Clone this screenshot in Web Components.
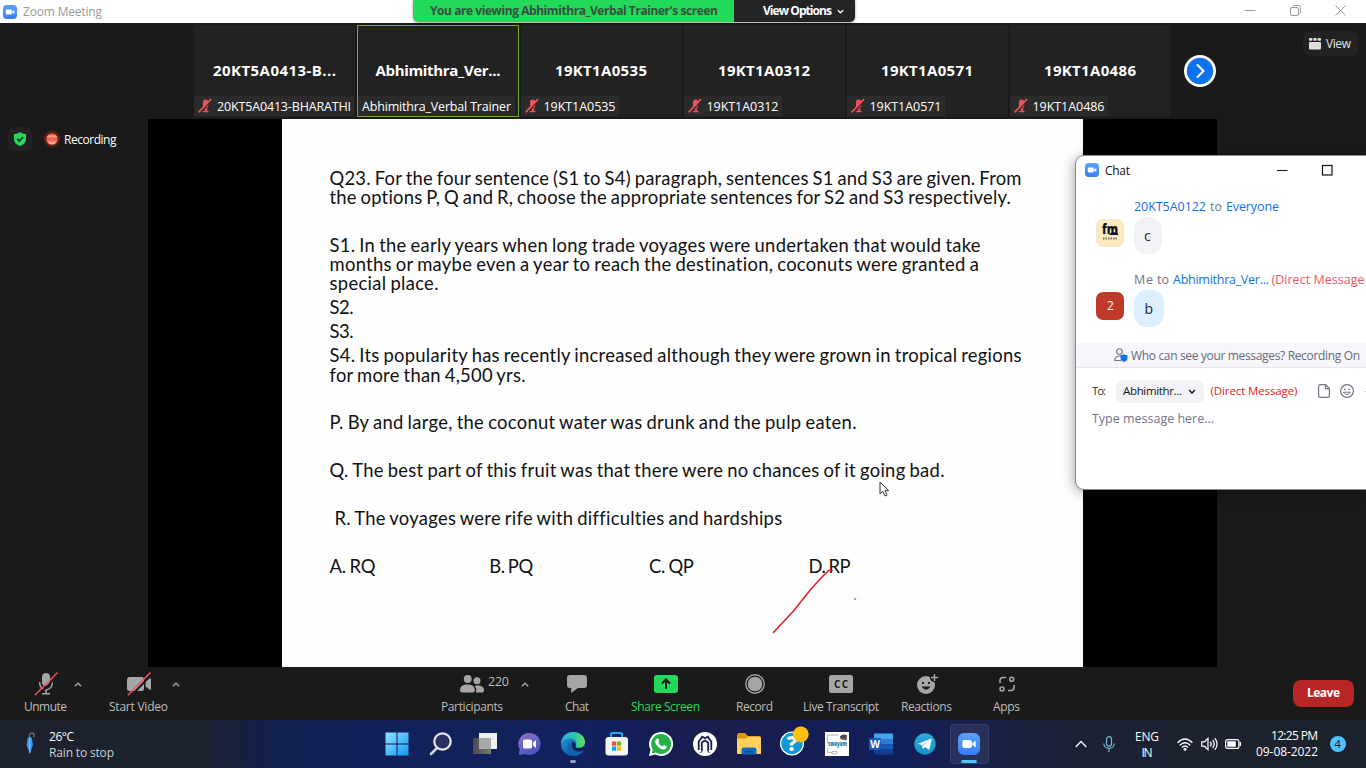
<!DOCTYPE html>
<html lang="en">
<head>
<meta charset="utf-8">
<title>Zoom Meeting</title>
<style>
html,body{margin:0;padding:0;overflow:hidden}
body{width:1366px;height:768px;font-family:"Open Sans","Noto Sans",sans-serif;font-size:12px;background:#1a1a1a}
</style>
</head>
<body>
<meeting-desktop></meeting-desktop>
<script>
const ICONS = {
zoom:[14,14,`<defs><linearGradient id="z" x2="0" y2="1"><stop stop-color="#5aa2fb"/><stop offset="1" stop-color="#3b7df5"/></linearGradient></defs><rect width="14" height="14" rx="3.8" fill="url(#z)"/><rect x="2.8" y="4.5" width="6" height="5" rx="1.1" fill="#fff"/><path d="M9.2 6.4 11.3 4.9v4.2L9.2 7.7z" fill="#fff"/>`],
micOff:[14,14,`<g fill="#f0525a"><rect x="5" y=".6" width="5.2" height="8.2" rx="2.6"/><path d="M5.300 9.500h4.400l-.6 1.500v1.100h1.500v1.200H4.600v-1.200h2.200v-1.600z"/></g><path d="M14 .4 1.900 14" stroke="#292929" stroke-width="1.500"/><path d="M13 .2.6 13.400" stroke="#f0525a" stroke-width="1.700"/>`],
shield:[12,14,`<path d="M6 0C8 1.6 10 2 12 2v5c0 3.5-2.7 5.9-6 7C2.700 12.900 0 10.500 0 7V2C2 2 4 1.600 6 0z" fill="#23d959"/><path d="M3.200 6.900 5.400 9l3.800-4" fill="none" stroke="#1f2a22" stroke-width="1.700"/>`],
rec:[20,20,`<defs><radialGradient id="g"><stop offset=".55" stop-color="#c4320b" stop-opacity=".75"/><stop offset="1" stop-color="#5a2010" stop-opacity="0"/></radialGradient><linearGradient id="h" x2="0" y2="1"><stop stop-color="#e5402e"/><stop offset=".25" stop-color="#ff9d92"/><stop offset=".5" stop-color="#f2503f"/><stop offset="1" stop-color="#ffc4b4"/></linearGradient></defs><circle cx="10" cy="10" r="9.500" fill="url(#g)"/><circle cx="10" cy="10" r="5.500" fill="url(#h)"/>`],
grid:[12,12,`<g fill="#dedede"><rect width="3.400" height="2.800" rx=".8"/><rect x="4.300" width="3.400" height="2.800" rx=".8"/><rect x="8.600" width="3.400" height="2.800" rx=".8"/><rect y="4" width="12" height="7.500" rx=".8"/></g>`],
next:[32,32,`<circle cx="16" cy="16" r="16" fill="#fff"/><circle cx="16" cy="16" r="13.200" fill="#0e72ed"/><path d="M13.500 10l6 6-6 6" fill="none" stroke="#fff" stroke-width="2" stroke-linecap="round"/>`],
min:[11,11,`<path d="M0 5.500h10.500" stroke="currentColor"/>`],
restore:[11,11,`<path d="M2.500 1.500Q2.700.5 3.800.5H8.500q2 0 2 2V7q0 1.200-1 1.500" fill="none" stroke="currentColor"/><rect x=".5" y="2.500" width="8" height="8" rx="1.500" fill="none" stroke="currentColor"/>`],
close:[11,11,`<path d="M.5.500l10 10M10.500.500l-10 10" stroke="currentColor"/>`],
square:[11,11,`<rect x=".5" y=".5" width="9.500" height="9.500" fill="none" stroke="currentColor" stroke-width="1.200"/>`],
down:[8,5,`<path d="M1 1l3 3 3-3" fill="none" stroke="currentColor" stroke-width="1.500"/>`],
up:[8,5,`<path d="M.8 4.300 4 1.200l3.200 3.100" fill="none" stroke="currentColor" stroke-width="1.400"/>`],
mic:[24,24,`<g fill="#a6a6a6"><rect x="8" y="1" width="8" height="13" rx="4"/><path d="M5 10v1.500a7 7 0 0 0 6.200 6.900V21H8v1.500h8V21h-3.200v-2.600a7 7 0 0 0 6.200-6.900V10h-1.500v1.500a5.500 5.500 0 0 1-11 0V10z"/></g><path d="M25 2 3 25" stroke="#1a1a1a" stroke-width="2"/><path d="M23.500.5.800 23.200" stroke="#f3545c" stroke-width="1.500"/>`],
cam:[26,24,`<rect x="1" y="5" width="17" height="14" rx="2.500" fill="#a6a6a6"/><path d="M19.500 9.500 23.500 6.500q1.500-.8 1.500.6v9.800q0 1.400-1.500.6l-4-3z" fill="#a6a6a6"/><path d="M26 2 4 25" stroke="#1a1a1a" stroke-width="2"/><path d="M24.500.5 1.800 23.200" stroke="#f3545c" stroke-width="1.500"/>`],
people:[24,18,`<g fill="#a6a6a6"><circle cx="7.700" cy="4" r="3.900"/><path d="M0 15c0-4.200 3.500-5.600 7.500-5.600s7.300 1.400 7.300 5.600q0 2.500-2.500 2.500H2.500Q0 17.500 0 15z"/><circle cx="17" cy="5.800" r="3.500"/><path d="M14.600 11c5-1.300 9.400.4 9.400 4.200 0 1.600-.8 2.300-2 2.300h-6.200c1.200-2.700.4-5.300-1.200-6.500z"/></g>`],
chat:[20,18,`<path d="M3 0h14q3 0 3 3v7q0 3-3 3H11l-6.800 5V13H3q-3 0-3-3V3q0-3 3-3z" fill="#a6a6a6"/>`],
share:[24,18,`<rect width="24" height="18" rx="3" fill="#23d959"/><path d="M12 14V5M8 8.500 12 4.500l4 4" fill="none" stroke="#1a1a1a" stroke-width="2"/>`],
record:[20,20,`<circle cx="10" cy="10" r="9.200" fill="none" stroke="#a6a6a6" stroke-width="1.400"/><circle cx="10" cy="10" r="7.300" fill="#a6a6a6"/>`],
cc:[24,18,`<rect width="24" height="18" rx="2.500" fill="#a6a6a6"/><text x="12" y="12.800" text-anchor="middle" textLength="14" font-size="10" font-weight="700" fill="#1a1a1a">CC</text>`],
react:[20,20,`<circle cx="9" cy="11" r="9" fill="#a6a6a6"/><circle cx="17.500" cy="3.600" r="4.600" fill="#1a1a1a"/><path d="M17.500 0v7M14 3.500h7" stroke="#a6a6a6" stroke-width="1.400"/><circle cx="6" cy="9" r="1.100"/><circle cx="12" cy="9" r="1.100"/><path d="M4.500 12.500Q9 19 13.500 12.500z" fill="#1a1a1a"/>`],
apps:[16,16,`<g fill="none" stroke="#a6a6a6" stroke-width="1.600"><path d="M7 1.500H4q-3 0-3 3V7M9 14.500h3q3 0 3-3V9"/><circle cx="12.700" cy="3.200" r="2"/><circle cx="3" cy="13" r="2"/></g>`],
userShield:[14,14,`<g fill="none" stroke="#747487" stroke-width="1.100"><circle cx="5.500" cy="3.500" r="2.800"/><path d="M7 12.500H.8C.8 9.500 2.500 8 6 8h1.500"/></g><path d="M10 6.200q1.500 1 3.500 1v3q0 2.600-3.500 3.800-3.500-1.200-3.500-3.800v-3q2 0 3.500-1z" fill="#0e72ed"/>`],
file:[12,14,`<path d="M2.500.600H7.500L11.400 4.500v7q0 1.900-1.900 1.900h-7Q.600 13.400.600 11.500v-9Q.600.600 2.500.600zM7.500.800v3.900h3.700" fill="none" stroke="#747487" stroke-width="1.200"/>`],
smile:[14,14,`<circle cx="7" cy="7" r="6.400" fill="none" stroke="#747487" stroke-width="1.200"/><circle cx="4.800" cy="5.300" r=".9" fill="#747487"/><circle cx="9.200" cy="5.300" r=".9" fill="#747487"/><path d="M3.500 8.200q3.500 4.800 7 0z" fill="none" stroke="#747487"/>`],
fm:[28,28,`<rect x=".5" y=".5" width="27" height="27" rx="6" fill="#fce9bd" stroke="#efe7d2"/><text x="6" y="14.500" textLength="16" lengthAdjust="spacingAndGlyphs" font-size="14" font-weight="800" fill="#111">fm</text><path d="M13 16q3-4 5-2.500 3-1.500 4.500 2.500z" fill="#10173d"/><path d="M7 19.500h14" stroke="#777" stroke-width="2.200" stroke-dasharray="1.500 1"/>`],
umbrella:[12,24,`<path d="M4.500 5.500V3.500Q4.500 1 7 1q2 0 2 2v2" fill="none" stroke="#77706d" stroke-width="1.400"/><path d="M2.800 6q2-2 4 0L8 13 6 18l-1.200 4.500L3.500 18 1.500 13z" fill="#3599ee"/><path d="M4.800 6v15" stroke="#82c7ff"/>`],
win:[24,24,`<defs><linearGradient id="w" x2="1" y2="1"><stop stop-color="#8de4ff"/><stop offset="1" stop-color="#1496f0"/></linearGradient></defs><path d="M.5.500h11v11H.5zM12.500.500h11v11h-11zM.5 12.500h11v11H.5zM12.500 12.500h11v11h-11z" fill="url(#w)"/>`],
search:[24,24,`<path d="M8.500 15.500 2 22" stroke="#cfd2d7" stroke-width="2.600" stroke-linecap="round"/><circle cx="13.500" cy="9.500" r="8.200" fill="#2a3263" stroke="#e6e8ee" stroke-width="2.200"/>`],
tasks:[24,24,`<defs><linearGradient id="t" x2="1"><stop stop-color="#4a4a4a"/><stop offset="1" stop-color="#777"/></linearGradient></defs><rect x="6" y="1" width="18" height="16" fill="#f1f1f1"/><rect y="6" width="18" height="16" fill="url(#t)"/><path d="M6 6h12v11H6z" fill="#a9a9ab"/>`],
teams:[24,24,`<defs><linearGradient id="m" x2=".6" y2="1"><stop stop-color="#a567b5"/><stop offset=".5" stop-color="#6767c4"/><stop offset="1" stop-color="#5051bd"/></linearGradient></defs><path d="M12.500 1A11 11 0 1 1 8 22l-5 1q-2 0-1.200-1.800l1-3.700A11 11 0 0 1 12.500 1z" fill="url(#m)"/><rect x="6" y="7.500" width="9" height="9" rx="1.500" fill="#fff"/><path d="M16 10.500l3-2.500v8l-3-2.500z" fill="#fff"/>`],
edge:[24,24,`<defs><linearGradient id="e" x2="1"><stop stop-color="#2fa9dd"/><stop offset=".6" stop-color="#2dc5b0"/><stop offset="1" stop-color="#67df51"/></linearGradient><linearGradient id="f" x2="1" y2="1"><stop stop-color="#2498e2"/><stop offset="1" stop-color="#0b4690"/></linearGradient></defs><circle cx="12" cy="12" r="12" fill="url(#f)"/><path d="M0 12C0 5 5.500 0 12 0c7 0 12 5 12 9.800 0 4-3 6.200-6.500 6.200-2.500 0-3.500-1.200-2.800-2.500C16 11 14.500 6.500 9.500 6.500 4.500 6.500 1 9 0 12z" fill="url(#e)"/><path d="M8 11c-4 6 0 12 5 12.800 4 .2 8-2 10-5-5 3-11 1-11.500-4.800z" fill="#1461ad"/><path d="M11 9.700q4 .5 3.700 3.800-1 2 2 2.500 3.500.5 6.300-1.500 1.500.5 0 3.500-6 3-9.700.300Q10 15.500 11 9.700z" fill="#12205a"/>`],
store:[24,24,`<path d="M6 5V2.500Q6 1 7.500 1h8Q17 1 17 2.500V5" fill="none" stroke="#23a7e9" stroke-width="2"/><rect x=".5" y="5" width="22.500" height="18.500" rx="3" fill="#f5f5f6"/><path d="M7 9.500h4.200v4.200H7z" fill="#f05022"/><path d="M12 9.500h4.200v4.200H12z" fill="#80b903"/><path d="M7 14.500h4.200v4.200H7z" fill="#04a1ea"/><path d="M12 14.500h4.200v4.200H12z" fill="#fbb700"/>`],
whatsapp:[24,24,`<path d="M12 0a12 12 0 1 1-5.500 22.600L0 24l1.500-6.200A12 12 0 0 1 12 0z" fill="#fff"/><path d="M12 2a10 10 0 1 1-5 18.600L2.800 21.500l1-4A10 10 0 0 1 12 2z" fill="#25b144"/><path d="M8 6.500q1.300-.4 1.700.8l.7 1.800-1.100 1.500q1.500 2.700 4.200 3.900l1.300-1.500 2.800 1.300q.5 3-2.900 3.300C10.500 17.500 6 12.500 6.200 9.300q.3-2 1.800-2.800z" fill="#fff"/>`],
hex:[24,24,`<circle cx="12" cy="12" r="12" fill="#fff"/><g fill="none" stroke="#19204c" stroke-width="1.800"><path d="M5.700 18V9.500L9.300 4.700 12 6.200l2.700-1.500 3.600 4.800V18"/><path d="M8.800 18.500V10.500L12 8.500l3.200 2v8"/></g><path d="M7.500 21 9.700 18M16.500 21l-2.200-3" stroke="#19204c"/>`],
folder:[24,24,`<path d="M0 3q0-2 2-2h6l3 3h11q2 0 2 2v14H0z" fill="#d9970e"/><path d="M0 6.500h9l2-1.800h11q2 0 2 2V22H0z" fill="#ffd15b"/><path d="M4.500 22.500V18q0-2.500 2.500-2.500h10q2.500 0 2.500 2.500v4.500z" fill="#0d6dbb"/><path d="M8 19.800h8" stroke="#15427c" stroke-width="1.500"/>`],
help:[32,30,`<circle cx="14" cy="17.500" r="12" fill="#fff"/><circle cx="14" cy="17.500" r="10.700" fill="#1097d5"/><text x="14" y="25" text-anchor="middle" font-size="21" font-weight="800" fill="#fff">?</text><circle cx="22.800" cy="8.300" r="7.900" fill="#ffc30f"/>`],
swayam:[24,24,`<rect width="24" height="24" fill="#fff"/><path d="M2.500 11V3h11" fill="none" stroke="#999" stroke-width=".8"/><path d="M15 4l3-1.500 4 .5-.5 5.500-6-1.500z" fill="#4c4648"/><path d="M18 6.500l3 .5" stroke="#c9504c"/><text x="3" y="13.500" textLength="19" lengthAdjust="spacingAndGlyphs" font-size="6.500" font-weight="800" fill="#187cac">swayam</text><path d="M2.500 16v4.500H7M7 19.500h5v2.300H7z" fill="none" stroke="#aaa" stroke-width=".8"/>`],
word:[24,24,`<path d="M5 1.500h19v7H5z" fill="#41a5ee"/><path d="M5 7h19v5.500H5z" fill="#2b7cd3"/><path d="M5 12.500h19V17H5z" fill="#185abd"/><path d="M5 17h19v5.500H5z" fill="#103f91"/><rect y="6" width="12" height="12" rx="1" fill="#185abd"/><text x="6" y="15.800" text-anchor="middle" font-size="10" font-weight="700" fill="#fff">W</text>`],
telegram:[24,24,`<defs><linearGradient id="k" x2="0" y2="1"><stop stop-color="#2aabdf"/><stop offset="1" stop-color="#1c8fc9"/></linearGradient></defs><circle cx="12" cy="12" r="10.700" fill="url(#k)"/><path d="M5 11.800 17.800 6.700q1-.2.8 1L16.500 17q-.3 1-1.200.5l-3.200-2.400-1.600 1.500q-.6.500-.8-.4l-1-3.200-3.500-1q-1-.4-.2-.9z" fill="#fff"/><path d="M9 13l7-4.700-5.700 5.600-.4 2z" fill="#a9d4ea"/>`],
tray:[12,8,`<path d="M.7 7 6 1.500 11.300 7" fill="none" stroke="#f3f4f6" stroke-width="1.400"/>`],
trayMic:[12,16,`<g fill="none" stroke="#6cb9d4" stroke-width="1.200"><rect x="3.500" y=".7" width="5" height="9.500" rx="2.500"/><path d="M.8 7.500c0 6.500 10.400 6.500 10.400 0M6 12.500V16"/></g>`],
wifi:[16,13,`<g fill="none" stroke="#fff" stroke-width="1.400"><path d="M.6 4.700q7.400-7.200 14.800 0M2.800 7.200q5.200-5 10.400 0M5 9.500q3-2.800 6 0"/></g><circle cx="8" cy="11.300" r="1.500" fill="#fff"/>`],
volume:[17,14,`<g fill="none" stroke="#fff" stroke-width="1.200"><path d="M.7 4.800H3.300L7 1.300v11.400L3.300 9.200H.7z"/><path d="M9.300 4.600q2 2.400 0 4.800M11.600 2.900q3.200 4.100 0 8.200M13.800 1.100q4.600 5.900 0 11.800"/></g>`],
battery:[17,10,`<rect x=".6" y=".6" width="13.300" height="8.800" rx="2" fill="none" stroke="#fff" stroke-width="1.200"/><rect x="2.300" y="2.300" width="8.500" height="5.400" rx=".5" fill="#fff"/><path d="M15.300 3v4" stroke="#fff" stroke-width="1.500"/>`],
cursor:[11,16,`<path d="M1 1v12l2.800-2.600L6 15l2-.9-2-4.400h3.700z" fill="#fff" stroke="#333" stroke-width="1"/>`],
stroke:[90,66,`<path d="M1 64 21.500 42 39 20 50 8 56.500 1.500h4" fill="none" stroke="#e0202b" stroke-width="1.600"/><circle cx="83" cy="30" r="1" fill="#ee5560"/>`]
};

/* <ui-icon name w h>: inline vector symbol */
customElements.define('ui-icon', class extends HTMLElement {
  connectedCallback(){
    const [w,h,body] = ICONS[this.getAttribute('name')];
    const W = this.getAttribute('w') || w, H = this.getAttribute('h') || h;
    (this.shadowRoot || this.attachShadow({mode:'open'})).innerHTML =
      `<style>:host{display:block;flex:none;width:${W}px;height:${H}px}svg{display:block;overflow:visible;font-family:"Open Sans",sans-serif}</style><svg width="${W}" height="${H}" viewBox="0 0 ${w} ${h}">${body}</svg>`;
  }
});

/* <ui-text w>: one line of text, tracked so that it fills w pixels */
customElements.define('ui-text', class extends HTMLElement {
  connectedCallback(){
    const w = parseFloat(this.getAttribute('w'));
    (this.shadowRoot || this.attachShadow({mode:'open'})).innerHTML =
      `<style>:host{display:block;flex:none;white-space:pre;line-height:16px;width:${w}px}span{display:inline-block;white-space:pre}</style><span><slot></slot></span>`;
    const s = this.shadowRoot.querySelector('span');
    const n = this.textContent.length;
    if(n > 1) this.style.letterSpacing = ((w - s.getBoundingClientRect().width)/(n-1)).toFixed(4)+'px';
  }
});

function define(name, css, html){
  customElements.define(name, class extends HTMLElement {
    connectedCallback(){
      if(this.shadowRoot) return;
      const a = k => this.getAttribute(k) ?? '';
      const t = document.createElement('template');
      t.innerHTML = `<style>${css}</style>` + (typeof html === 'function' ? html(a) : html);
      this.attachShadow({mode:'open'}).append(t.content.cloneNode(true));
    }
  });
}

define('title-bar', `:host{display:flex;align-items:center;height:23px;background:#fff;color:#999;padding:0 20px 0 3px;box-sizing:border-box}
ui-text{margin-left:6px;padding-top:1px}.sp{flex:1}.c{display:flex;gap:34px;padding-bottom:2px}`,
`<ui-icon name="zoom"></ui-icon><ui-text w="79">Zoom Meeting</ui-text><div class="sp"></div><div class="c"><ui-icon name="min"></ui-icon><ui-icon name="restore"></ui-icon><ui-icon name="close"></ui-icon></div>`);

define('share-banner', `:host{display:flex;height:22px;width:442px;border-radius:0 0 5px 5px;overflow:hidden;font-weight:700;box-shadow:0 1px 3px #0006}
.g{width:321px;background:#23d959;color:#36503f;box-sizing:border-box;padding:3px 0 0 17px}.d{flex:1;background:#232426;color:#fff;display:flex;padding:3px 0 0 29px}ui-icon{margin:6px 0 0 5px}`,
`<div class="g"><ui-text w="288">You are viewing Abhimithra_Verbal Trainer's screen</ui-text></div><div class="d"><ui-text w="69">View Options</ui-text><ui-icon name="down" w="7" h="5"></ui-icon></div>`);

define('video-tile', `:host{display:flex;flex-direction:column;justify-content:flex-end;width:161px;height:92px;background:#222;position:relative;color:#fff}
:host([active]){box-shadow:inset 0 0 0 1px #7aa82a}
.n{font-size:15px;font-weight:700;flex:1;display:flex;justify-content:center;align-items:center;padding-top:19px}.n ui-text{line-height:20px}
.l{align-self:flex-start;display:flex;align-items:center;height:20px;background:#2b2b2b;padding:0 3px 0 4px;gap:5px;font-size:12.500px}.l ui-text{padding-top:1px}
:host([active]) .l{padding:0 4px;margin:0 0 1px 1px}:host(:not([active])) .l{margin-bottom:1px}`,
a=>`<div class="n"><ui-text w="${a('nw')}">${a('name')}</ui-text></div><div class="l">${a('muted')?'<ui-icon name="micOff"></ui-icon>':''}<ui-text w="${a('lw')}">${a('label')}</ui-text></div>`);

define('film-strip', `:host{display:flex;align-items:flex-start;height:96px;padding:2px 8px 0 194px;box-sizing:border-box;gap:2px;background:#1a1a1a}
video-tile[active]{width:162px}video-tile[active]+video-tile{margin-left:-.5px}
.next{margin:30px 0 0 11.500px}.view{margin:6px 0 0 auto;display:flex;align-items:center;gap:5px;width:55px;height:25px;background:#222;border-radius:7px;padding-left:6px;box-sizing:border-box;color:#e6e6e6}`,
`<video-tile name="20KT5A0413-B..." nw="123" label="20KT5A0413-BHARATHI" lw="134" muted="1"></video-tile>
<video-tile active name="Abhimithra_Ver..." nw="125" label="Abhimithra_Verbal Trainer" lw="149"></video-tile>
<video-tile name="19KT1A0535" nw="92" label="19KT1A0535" lw="72" muted="1"></video-tile>
<video-tile name="19KT1A0312" nw="92" label="19KT1A0312" lw="72" muted="1"></video-tile>
<video-tile name="19KT1A0571" nw="92" label="19KT1A0571" lw="72" muted="1"></video-tile>
<video-tile name="19KT1A0486" nw="92" label="19KT1A0486" lw="72" muted="1"></video-tile>
<ui-icon class="next" name="next"></ui-icon><div class="view"><ui-icon name="grid"></ui-icon><ui-text w="25">View</ui-text></div>`);

define('slide-view', `:host{display:block;position:relative;width:801px;height:548px;background:#fefefe;box-sizing:border-box;padding:49.200px 0 0 47.500px;color:#111;font-family:Lato,sans-serif;font-size:18.400px;word-spacing:-1px}
ui-text{line-height:19px;margin-top:.4px}.p{margin-top:4.900px}.b{margin-top:28.700px}.r{margin-left:5px}
.o{display:grid;grid-template-columns:repeat(4,159.700px)}.ink{position:absolute;left:490px;top:450px}.cur{position:absolute;left:597px;top:362px}`,
`<ui-text w="692">Q23. For the four sentence (S1 to S4) paragraph, sentences S1 and S3 are given. From</ui-text>
<ui-text w="682">the options P, Q and R, choose the appropriate sentences for S2 and S3 respectively.</ui-text>
<ui-text class="b" w="651">S1. In the early years when long trade voyages were undertaken that would take</ui-text>
<ui-text w="650">months or maybe even a year to reach the destination, coconuts were granted a</ui-text>
<ui-text w="109">special place.</ui-text>
<ui-text class="p" w="24">S2.</ui-text>
<ui-text class="p" w="24">S3.</ui-text>
<ui-text class="p" w="692">S4. Its popularity has recently increased although they were grown in tropical regions</ui-text>
<ui-text w="196">for more than 4,500 yrs.</ui-text>
<ui-text class="b" w="527">P. By and large, the coconut water was drunk and the pulp eaten.</ui-text>
<ui-text class="b" w="615">Q. The best part of this fruit was that there were no chances of it going bad.</ui-text>
<ui-text class="b r" w="447">R. The voyages were rife with difficulties and hardships</ui-text>
<div class="o b"><ui-text w="46">A. RQ</ui-text><ui-text w="44">B. PQ</ui-text><ui-text w="45">C. QP</ui-text><ui-text w="42">D. RP</ui-text></div>
<ui-icon class="ink" name="stroke"></ui-icon><ui-icon class="cur" name="cursor"></ui-icon>`);

define('meeting-stage', `:host{display:grid;grid-template-columns:148px 1069px 149px;height:548px;background:#1a1a1a}
.side{display:flex;align-items:center;height:24px;margin:8px 0 0 8px;color:#fff}.sh{width:24px;height:24px;border-radius:6px;background:#222;display:grid;place-items:center}
.side>ui-icon{margin-left:10px}.side ui-text{margin-left:2px;padding-top:1px}.scr{background:#000;padding-left:134px}`,
`<div class="side"><div class="sh"><ui-icon name="shield"></ui-icon></div><ui-icon name="rec"></ui-icon><ui-text w="52.500">Recording</ui-text></div><div class="scr"><slide-view></slide-view></div>`);

define('tool-button', `:host{display:flex;flex-direction:column;align-items:center;width:var(--w);color:#bdbdbd}
:host(.share){color:#23d959}
.i{height:27px;display:flex;align-items:center;justify-content:center;width:100%;margin:-1px 0 2px}`,
a=>`<div class="i"><slot name="icon">${a('icon')?`<ui-icon name="${a('icon')}"></ui-icon>`:''}</slot></div><ui-text w="${a('w')}">${a('label')}</ui-text>`);

define('tool-bar', `:host{display:flex;height:53px;background:#1a1a1a;padding:4px 12px 0 24px;box-sizing:border-box;color:#a6a6a6;align-items:flex-start}
.up{margin-top:11px}.ppl{display:flex;align-items:center;gap:4px;width:50px;margin-left:25px;font-size:12.500px}.ppl ui-text{margin-top:-4px}
.leave{margin:9px 0 0 auto;width:61px;height:27px;box-sizing:border-box;background:#b82626;border-radius:8px;color:#fff;font-weight:700;display:grid;place-items:center;padding-bottom:1px}
`,
`<tool-button icon="mic" label="Unmute" w="43" style="--w:43px"></tool-button><ui-icon class="up" style="margin-left:7px" name="up"></ui-icon>
<tool-button icon="cam" label="Start Video" w="59" style="--w:59px;margin-left:27px"></tool-button><ui-icon class="up" style="margin-left:4px" name="up"></ui-icon>
<tool-button label="Participants" w="62" style="--w:62px;margin-left:261px"><div class="ppl" slot="icon"><ui-icon name="people"></ui-icon><ui-text w="21">220</ui-text></div></tool-button><ui-icon class="up" style="margin-left:18px" name="up"></ui-icon>
<tool-button icon="chat" label="Chat" w="24" style="--w:24px;margin-left:36px"></tool-button>
<tool-button class="share" icon="share" label="Share Screen" w="69" style="--w:69px;margin-left:42px"></tool-button>
<tool-button icon="record" label="Record" w="37" style="--w:37px;margin-left:36px"></tool-button>
<tool-button icon="cc" label="Live Transcript" w="76" style="--w:76px;margin-left:30px"></tool-button>
<tool-button icon="react" label="Reactions" w="51" style="--w:51px;margin-left:22px"></tool-button>
<tool-button icon="apps" label="Apps" w="27" style="--w:27px;margin-left:41px"></tool-button>
<div class="leave"><ui-text w="33">Leave</ui-text></div>`);

define('task-item', `:host{position:relative;display:grid;place-items:center;width:44px;height:48px;flex:none}
:host([active])::before{content:"";position:absolute;inset:4px 2.500px;background:#ffffff14;border:1px solid #ffffff12;border-radius:4px}
ui-icon{position:relative}
i{position:absolute;bottom:5px;width:6px;height:3px;border-radius:2px;background:#9a9fb2}:host([active]) i{width:16px;background:#4cc2ff}`,
a=>`<ui-icon name="${a('icon')}" ${a('size')}></ui-icon>${a('run')?'<i></i>':''}`);

define('task-bar', `:host{display:flex;height:48px;align-items:center;color:#fff;background:linear-gradient(90deg,#1c222d 0,#1c212f 205px,#11204c 265px,#12205a 370px,#11235a 470px,#11205e 590px,#191d4c 720px,#101f5a 880px,#17204b 980px,#1b2132 1070px,#1c222b 1366px);padding:0 20px 0 25px;box-sizing:border-box}
.w{display:flex;gap:12px;width:350px;align-items:center}.w div{padding-top:2px}.w div :last-child{color:#ccd0d6}.a{display:flex}.t{display:flex;align-items:center;margin-left:84px;flex:1}.lang{margin:0 17px 0 20px;padding-top:2px;display:grid;justify-items:center}
.clk{display:grid;justify-items:end;margin-left:14px}.n{margin-left:12px;width:16px;height:16px;border-radius:50%;background:#4cc2ff;color:#111;display:grid;place-items:center;font-size:11px}.help{transform:translate(1px,-3px)}`,
`<div class="w"><ui-icon name="umbrella"></ui-icon><div><ui-text w="25">26°C</ui-text><ui-text w="65">Rain to stop</ui-text></div></div>
<div class="a">${['win','search','tasks','teams','edge','store','whatsapp','hex','folder','help','swayam','word','telegram','zoom'].map(n=>`<task-item class="${n}" icon="${n}" ${n=='zoom'?'active size=\'w="22" h="22"\' run="1"':n=='edge'?'run="1"':''}></task-item>`).join('')}</div>
<div class="t"><ui-icon name="tray"></ui-icon><ui-icon name="trayMic" style="margin-left:16px"></ui-icon><div class="lang"><ui-text w="24">ENG</ui-text><ui-text w="11">IN</ui-text></div><ui-icon name="wifi" style="margin-left:1px"></ui-icon><ui-icon name="volume" style="margin-left:8px"></ui-icon><ui-icon name="battery" style="margin-left:7px"></ui-icon><div class="clk"><ui-text w="47">12:25 PM</ui-text><ui-text w="62">09-08-2022</ui-text></div><div class="n"><ui-text w="7">4</ui-text></div></div>`);

define('chat-message', `:host{display:grid;grid-template-columns:28px 1fr;column-gap:10px;padding-left:20px}
.h{grid-column:2;display:flex;align-items:center;height:20px}
.av{width:28px;height:28px;margin:2px 0 0 .4px}
.b{justify-self:start;height:37px;width:28px;border-radius:13px;background:#f2f2f7;display:grid;place-items:center;font-size:14px;color:#232333}:host([mine]) .b{background:#dcefff;width:30px}`,
a=>`<div class="h"><slot name="head"></slot></div><div class="av"><slot name="avatar"></slot></div><div class="b"><slot></slot></div>`);

define('chat-window', `:host{display:flex;flex-direction:column;width:290px;height:333px;box-sizing:border-box;background:#fff;border-radius:8px 0 0 8px;overflow:hidden;color:#111;box-shadow:0 0 0 1px #8c8c8c,0 2px 14px #0007}
.t{display:flex;align-items:center;height:28px;padding:0 33px 0 9px;flex:none}.t ui-text{margin:1px auto 0 6px}.t ui-icon+ui-icon{margin-left:34px}
.h{display:flex;align-items:center;gap:4px;font-size:12.500px;color:#747487}.n{color:#0e72ed}.d{color:#ee5860;margin-left:-1.500px}
chat-message{margin-top:13px}chat-message+chat-message{margin-top:16px}
.me{width:28px;height:28px;border-radius:7px;background:#c1392b;color:#fff;display:grid;place-items:center}
.s{margin-top:16px;height:24px;background:#f7f7fc;border-bottom:1px solid #e6e6ef;display:flex;align-items:center;gap:3.500px;padding-left:37.500px;color:#68687b;font-size:12px;flex:none}.s ui-text{padding-top:1px}
.to{display:flex;align-items:center;margin:11.500px 0 .5px 16px;height:23px;font-size:11.500px;color:#333;flex:none}
.sel{display:flex;align-items:center;gap:6px;width:88px;height:23px;background:#f2f2f7;border-radius:7px;margin:0 6.500px 0 10px;padding-left:7px;box-sizing:border-box;color:#131619;flex:none}.to ui-text{margin-top:-1px}
.r{color:#dd1d28}.ph{margin:8px 0 0 16px;color:#747487;font-size:12.500px}`,
`<div class="t"><ui-icon name="zoom"></ui-icon><ui-text w="25">Chat</ui-text><ui-icon name="min"></ui-icon><ui-icon name="square"></ui-icon></div>
<chat-message><div slot="head" class="h"><ui-text class="n" w="72">20KT5A0122</ui-text><ui-text w="12">to</ui-text><ui-text class="n" w="53">Everyone</ui-text></div><ui-icon slot="avatar" name="fm"></ui-icon><ui-text w="8">c</ui-text></chat-message>
<chat-message mine><div slot="head" class="h"><ui-text w="19">Me</ui-text><ui-text w="12">to</ui-text><ui-text class="n" w="96">Abhimithra_Ver...</ui-text><ui-text class="d" w="93">(Direct Message</ui-text></div><div slot="avatar" class="me"><ui-text w="7">2</ui-text></div><ui-text w="9">b</ui-text></chat-message>
<div class="s"><ui-icon name="userShield"></ui-icon><ui-text w="229">Who can see your messages? Recording On</ui-text></div>
<div class="to"><ui-text w="14">To:</ui-text><div class="sel"><ui-text w="59">Abhimithr...</ui-text><ui-icon name="down"></ui-icon></div><ui-text class="r" w="87">(Direct Message)</ui-text><ui-icon name="file" style="margin-left:20px"></ui-icon><ui-icon name="smile" style="margin-left:10px"></ui-icon><ui-icon name="min" w="6" style="margin-left:11px;color:#747487"></ui-icon></div>
<ui-text class="ph" w="122">Type message here...</ui-text>`);

define('meeting-desktop', `:host{display:grid;grid-template-rows:23px 96px 548px 53px 48px;width:1366px;height:768px;position:relative;overflow:hidden}
share-banner{position:absolute;left:413px;top:0}chat-window{position:absolute;left:1076px;top:156px}`,
`<title-bar></title-bar><film-strip></film-strip><meeting-stage></meeting-stage><tool-bar></tool-bar><task-bar></task-bar><share-banner></share-banner><chat-window></chat-window>`);
</script>
</body>
</html>
